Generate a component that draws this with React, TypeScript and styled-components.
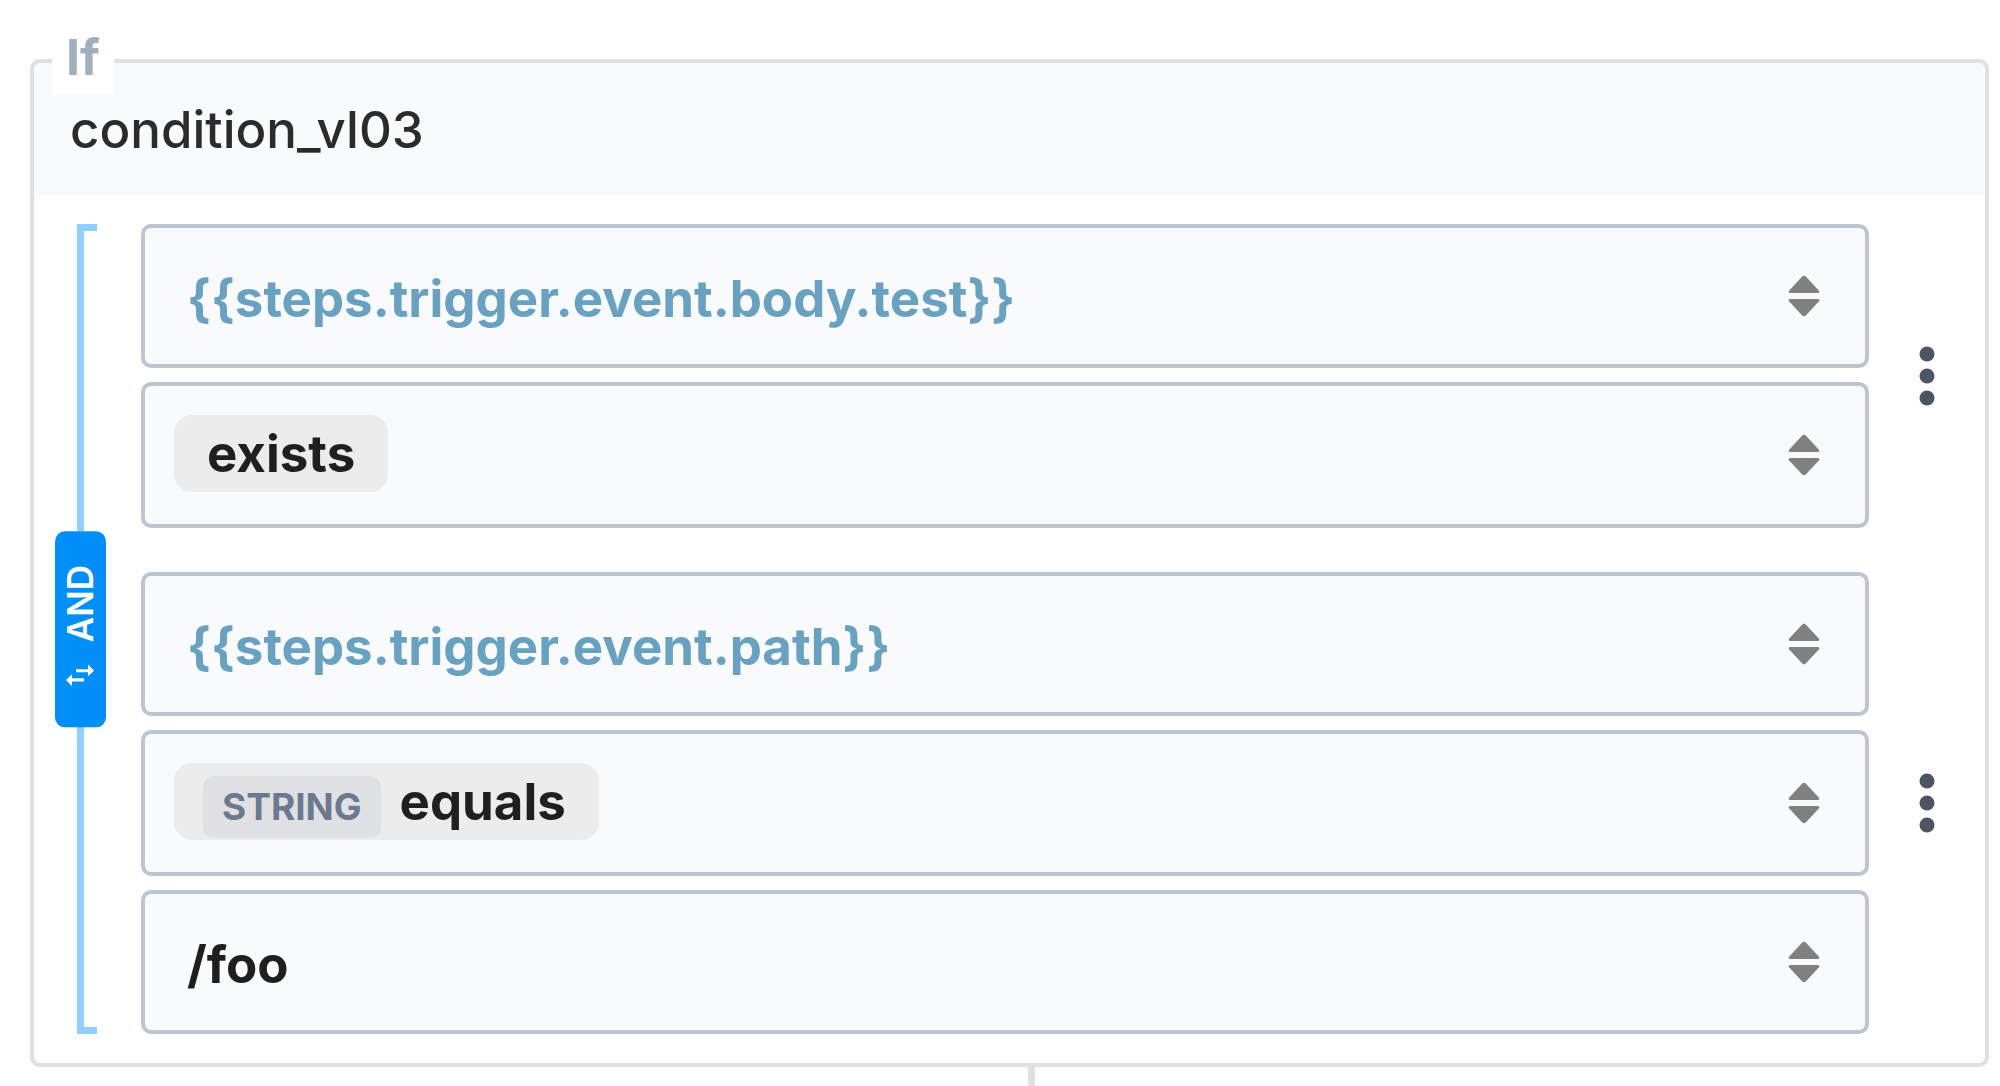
import React from "react";
import styled, { createGlobalStyle } from "styled-components";

const GlobalStyle = createGlobalStyle`
  *, *::before, *::after { box-sizing: border-box; }
  body {
    margin: 0;
    background: #fefefe;
    font-family: Inter, "Liberation Sans", sans-serif;
    color: #1f1f1f;
  }
  button, select { font: inherit; color: inherit; cursor: pointer; }
`;

const Page = styled.main`
  display: flex;
  flex-direction: column;
  padding: 59px 11px 0 30px;
`;

const Card = styled.section`
  position: relative;
  border: 4px solid #e0e0e0;
  border-radius: 10px;
  background: #fefefe;
`;

const KindBadge = styled.span`
  position: absolute;
  top: -44px;
  left: 18px;
  padding: 0 14px;
  background: #fefefe;
  color: #a0aec0;
  font-size: 50px;
  font-weight: 700;
  line-height: 76px;
`;

const CardHeader = styled.header`
  padding: 37px 36px 35px;
  border-radius: 6px 6px 0 0;
  background: #f9fafc;
`;

const StepName = styled.h2`
  margin: 0;
  color: #2b2b2b;
  font-size: 51px;
  font-weight: 500;
  line-height: 60px;
`;

const CardBody = styled.div`
  display: flex;
  gap: 35px;
  padding: 29px 0 29px 21px;
`;

const Rail = styled.div`
  display: flex;
  flex: none;
  flex-direction: column;
  width: 51px;
`;

const RailArm = styled.div<{ $end: "top" | "bottom" }>`
  flex: 1;
  width: 20px;
  margin-left: 22px;
  border: 0 solid #90cfff;
  border-left-width: 7px;
  border-${(p) => p.$end}-width: 7px;
`;

const JoinButton = styled.button`
  display: flex;
  align-items: center;
  gap: 22px;
  padding: 41px 0 34px;
  border: 0;
  border-radius: 10px;
  background: #008ff7;
  color: #fff;
  font-size: 35px;
  font-weight: 600;
  line-height: 51px;
  writing-mode: vertical-rl;
  transform: rotate(180deg);
`;

const Conditions = styled.div`
  display: flex;
  flex: 1;
  flex-direction: column;
  gap: 44px;
  min-width: 0;
`;

const Condition = styled.div`
  display: flex;
  align-items: center;
`;

const Fields = styled.div`
  display: flex;
  flex: 1;
  flex-direction: column;
  gap: 14px;
  min-width: 0;
`;

const MenuButton = styled.button`
  display: flex;
  justify-content: center;
  width: 116px;
  padding: 16px 0;
  border: 0;
  background: none;
`;

const FieldFrame = styled.div`
  display: grid;
  align-items: center;
  border: 4px solid #bcc6d2;
  border-radius: 10px;
  background: #f9fafc;

  > * { grid-area: 1 / 1; }
`;

const FieldSelect = styled.select<{ $reference?: boolean }>`
  appearance: none;
  width: 100%;
  padding: 41px 96px 35px 42px;
  border: 0;
  border-radius: 6px;
  background: none;
  color: ${(p) => (p.$reference ? "#69a2c0" : "#1f1f1f")};
  font-size: 51px;
  font-weight: 700;
  line-height: 60px;
`;

const OperatorButton = styled.button`
  display: flex;
  width: 100%;
  padding: 29px 96px 32px 29px;
  border: 0;
  border-radius: 6px;
  background: none;
`;

const Chip = styled.span`
  display: flex;
  align-items: baseline;
  gap: 19px;
  padding: 0 33px;
  border-radius: 18px;
  background: #ececec;
  font-size: 51px;
  font-weight: 700;
  line-height: 77px;
`;

const TypeTag = styled.span`
  margin-left: -4px;
  padding: 0 19px;
  border-radius: 10px;
  background: #e0e1e3;
  color: #6b7a90;
  font-size: 37px;
  line-height: 62px;
`;

const SortMark = styled.svg`
  justify-self: end;
  width: 32px;
  height: 42px;
  margin-right: 45px;
  fill: #808080;
  pointer-events: none;
`;

const Connector = styled.div`
  width: 7px;
  height: 19px;
  margin-left: calc(50% + 18px);
  background: #e0e0e0;
`;

const SortIcon = () => (
  <SortMark viewBox="0 0 32 42" aria-hidden="true">
    <path d="M14 1.700Q16 -.3 18 1.700L31 15.800Q32.200 18 29.500 18H2.500Q-.2 18 1 15.800Z" />
    <path d="M14 40.300Q16 42.300 18 40.300L31 26.200Q32.200 24 29.500 24H2.500Q-.2 24 1 26.200Z" />
  </SortMark>
);

const SwapIcon = () => (
  <svg width="28" height="22" viewBox="0 0 28 22" fill="#fff" aria-hidden="true">
    <path d="M10 4.800H22V0L28 6.300L22 12V8H10Z" />
    <path d="M18 17.200H6V22L0 15.700L6 10V14H18Z" />
  </svg>
);

const DotsIcon = () => (
  <svg width="16" height="60" viewBox="0 0 16 60" fill="#4d5562" aria-hidden="true">
    <circle cx="8" cy="8" r="7.500" />
    <circle cx="8" cy="30" r="7.500" />
    <circle cx="8" cy="52" r="7.500" />
  </svg>
);

type ValueFieldProps = { label: string; value: string; reference?: boolean };

const ValueField = ({ label, value, reference }: ValueFieldProps) => (
  <FieldFrame>
    <FieldSelect aria-label={label} $reference={reference} defaultValue={value}>
      <option>{value}</option>
    </FieldSelect>
    <SortIcon />
  </FieldFrame>
);

type OperatorFieldProps = { operator: string; type?: string };

const OperatorField = ({ operator, type }: OperatorFieldProps) => (
  <FieldFrame>
    <OperatorButton type="button" aria-haspopup="listbox">
      <Chip>
        {type && <TypeTag>{type}</TypeTag>}
        {operator}
      </Chip>
    </OperatorButton>
    <SortIcon />
  </FieldFrame>
);

type Rule = { left: string; operator: string; type?: string; right?: string };

const rules: Rule[] = [
  { left: "{{steps.trigger.event.body.test}}", operator: "exists" },
  { left: "{{steps.trigger.event.path}}", operator: "equals", type: "STRING", right: "/foo" },
];

export default function App() {
  return (
    <>
      <GlobalStyle />
      <Page>
        <Card>
          <CardHeader>
            <StepName>condition_vl03</StepName>
          </CardHeader>
          <KindBadge>If</KindBadge>
          <CardBody>
            <Rail>
              <RailArm $end="top" />
              <JoinButton type="button">
                <SwapIcon />
                AND
              </JoinButton>
              <RailArm $end="bottom" />
            </Rail>
            <Conditions>
              {rules.map((rule) => (
                <Condition key={rule.left}>
                  <Fields>
                    <ValueField label="Value to test" value={rule.left} reference />
                    <OperatorField operator={rule.operator} type={rule.type} />
                    {rule.right && <ValueField label="Compare with" value={rule.right} />}
                  </Fields>
                  <MenuButton type="button" aria-label="Condition options">
                    <DotsIcon />
                  </MenuButton>
                </Condition>
              ))}
            </Conditions>
          </CardBody>
        </Card>
        <Connector />
      </Page>
    </>
  );
}
